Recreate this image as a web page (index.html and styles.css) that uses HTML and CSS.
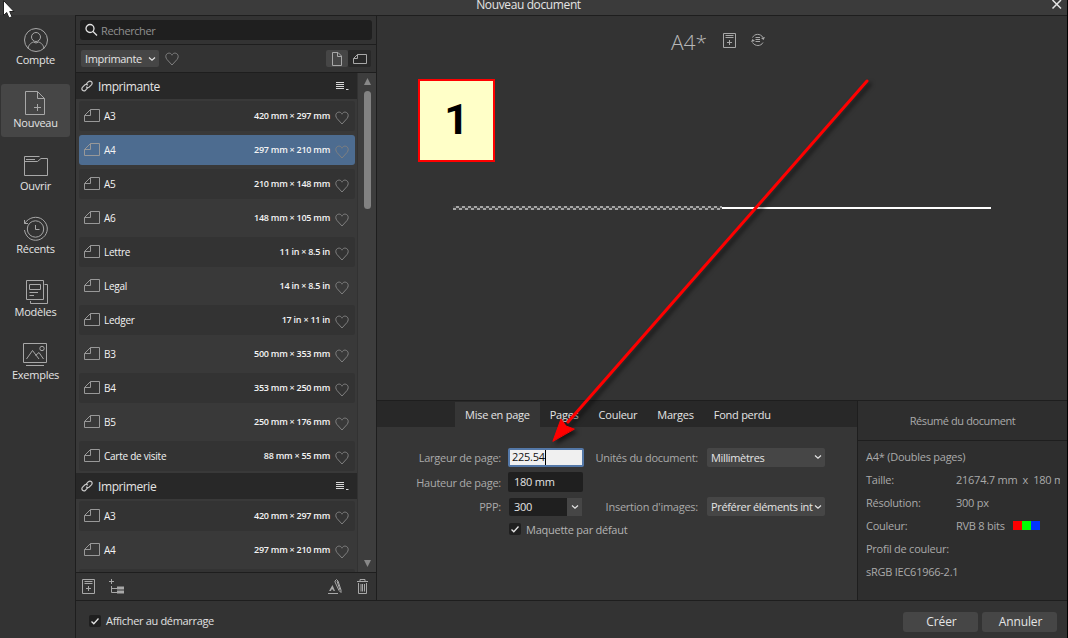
FILE: index.html
```html
<!DOCTYPE html>
<html lang="fr">
  <head>
    <meta charset="UTF-8" />
    <meta name="viewport" content="width=device-width, initial-scale=1.0" />
    <title>Nouveau document</title>
    <link rel="stylesheet" href="styles.css">
  </head>
  <body>
    <!-- shared icons -->
    <svg class="defs" width="0" height="0">
      <symbol id="landscape" viewBox="0 0 18 15">
        <path d="M6.500 1.500H15.500V13.500H.5V7.500L6.500 1.500V7.500H.5" />
      </symbol>
      <symbol id="heart" viewBox="0 0 14 14">
        <path d="M7 13L2 7.500C.6 5.800.4 3.600 1.600 2.200C3.400.4 6.200.9 7 3.200C7.800.9 10.600.4 12.400 2.200C13.600 3.600 13.400 5.800 12 7.500Z" />
      </symbol>
      <symbol id="link" viewBox="0 0 12 12">
        <path d="M5.200 4.200L7.400 1.700Q9 .4 10.500 1.700Q11.800 3.300 10.400 4.800L8 7.200Q6.500 8 5.200 6.800" />
        <path d="M6.800 7.600L4.600 10.200Q3 11.600 1.500 10.300Q.2 8.700 1.600 7.200L4 4.800Q5.500 4 6.800 5.200" />
      </symbol>
      <symbol id="menu" viewBox="0 0 14 10">
        <path d="M0 1.500H8M0 3.500H8M0 5.500H8M0 7.500H8" /><path d="M10 8.500H12.500" />
      </symbol>
      <symbol id="chevron" viewBox="0 0 8 6">
        <path d="M1 1.500L4 4.200L7 1.500" />
      </symbol>
      <symbol id="check" viewBox="0 0 12 12">
        <path d="M2.500 6.500L4.800 8.700L9.500 3.500" />
      </symbol>
      <symbol id="addpage" viewBox="0 0 14 17">
        <path d="M.5 1.500H12.500V15.500H.5Z M2.500 3.500H10.500 M2.500 5.500H10.500 M4 10.500H9 M6.500 8V13" />
      </symbol>
    </svg>

    <header class="titlebar">
      <h1>Nouveau document</h1>
      <svg class="close" width="12" height="12" viewBox="0 0 12 12"><path d="M1.500 0L10 8.500M10 0L1.500 8.500" /></svg>
    </header>

    <div class="window">
      <nav class="sidebar">
        <a class="side_item">
          <svg width="26" height="26" viewBox="0 0 26 26"><circle cx="13" cy="13" r="11.500" /><circle cx="13" cy="10" r="4.500" /><path d="M5 21.500C6 16.500 9 15.500 10.500 15Q13 17 15.500 15C17 15.500 20 16.500 21 21.500" /></svg>
          Compte
        </a>
        <a class="side_item valgt">
          <svg width="26" height="26" viewBox="0 0 26 26"><path d="M2.500 1.500H14.500L21.500 8.500V24.500H2.500ZM14.500 1.500V8.500H21.500M11 17.500H18M14.500 14V21" /></svg>
          Nouveau
        </a>
        <a class="side_item">
          <svg width="26" height="26" viewBox="0 0 26 26"><path d="M1.500 9V3.500H16.500M3 6.500H12M1.500 8.500H14.500L18 5.500H24.500V22.500H1.500Z" /></svg>
          Ouvrir
        </a>
        <a class="side_item">
          <svg width="26" height="26" viewBox="0 0 26 26"><circle cx="12.500" cy="13" r="8.200" /><path d="M12.500 9V13.500H16.500M1.500 4V7.500H5M1.500 7.500C6 1 14 -.5 19.500 3.500C24.500 7.500 26 14 22 19.500C17 26 8 25.500 4 20Q1.800 17 1.500 14" /></svg>
          Récents
        </a>
        <a class="side_item">
          <svg width="26" height="26" viewBox="0 0 26 26"><path d="M3.500 1.500H20.500V20.500H3.500ZM6.500 5.500H17.500V10.500H6.500ZM6.500 13.500H15M6.500 16.500H11M21.500 5.500H24.500V24.500H7.500V22" /></svg>
          Modèles
        </a>
        <a class="side_item">
          <svg width="26" height="26" viewBox="0 0 26 26"><path d="M.5 1.500H23.500V20.500H.5ZM3 23.500H21M3.500 17L9.500 8.500L16 17M12.500 13.500L16 10.500L20.500 17" /><circle cx="19" cy="6.500" r="2.200" /></svg>
          Exemples
        </a>
      </nav>

      <div class="content">
        <section class="presets">
          <div class="search_row">
            <div class="search">
              <svg width="14" height="14" viewBox="0 0 14 14"><circle cx="5" cy="5.500" r="4" /><path d="M8 8.500L12 12.500" /></svg>
              <span>Rechercher</span>
            </div>
          </div>
          <div class="filter_row">
            <div class="select small">Imprimante <svg width="8" height="6"><use href="#chevron" /></svg></div>
            <svg class="heart" width="14" height="14"><use href="#heart" /></svg>
            <div class="orientation">
              <span class="active"><svg width="12" height="16" viewBox="0 0 12 16"><path d="M1.500 1.500H7L10.500 5V14.500H1.500ZM6.500 1.500V5.500H10.500" /></svg></span>
              <span><svg width="17" height="14" viewBox="0 0 17 14"><path d="M6.500 2.500H15.500V11.500H2.500V6.500L6.500 2.500V6.500H2.500" /></svg></span>
            </div>
          </div>

          <div class="list_area">
            <div class="list">
              <h2><svg width="12" height="12"><use href="#link" /></svg>Imprimante<svg class="menu" width="14" height="10"><use href="#menu" /></svg></h2>
              <ul>
                <li><svg class="page" width="18" height="15"><use href="#landscape" /></svg><b>A3</b><i>420 mm × 297 mm</i><svg class="heart" width="14" height="14"><use href="#heart" /></svg></li>
                <li class="selected"><svg class="page" width="18" height="15"><use href="#landscape" /></svg><b>A4</b><i>297 mm × 210 mm</i><svg class="heart" width="14" height="14"><use href="#heart" /></svg></li>
                <li><svg class="page" width="18" height="15"><use href="#landscape" /></svg><b>A5</b><i>210 mm × 148 mm</i><svg class="heart" width="14" height="14"><use href="#heart" /></svg></li>
                <li><svg class="page" width="18" height="15"><use href="#landscape" /></svg><b>A6</b><i>148 mm × 105 mm</i><svg class="heart" width="14" height="14"><use href="#heart" /></svg></li>
                <li><svg class="page" width="18" height="15"><use href="#landscape" /></svg><b>Lettre</b><i>11 in × 8.5 in</i><svg class="heart" width="14" height="14"><use href="#heart" /></svg></li>
                <li><svg class="page" width="18" height="15"><use href="#landscape" /></svg><b>Legal</b><i>14 in × 8.5 in</i><svg class="heart" width="14" height="14"><use href="#heart" /></svg></li>
                <li><svg class="page" width="18" height="15"><use href="#landscape" /></svg><b>Ledger</b><i>17 in × 11 in</i><svg class="heart" width="14" height="14"><use href="#heart" /></svg></li>
                <li><svg class="page" width="18" height="15"><use href="#landscape" /></svg><b>B3</b><i>500 mm × 353 mm</i><svg class="heart" width="14" height="14"><use href="#heart" /></svg></li>
                <li><svg class="page" width="18" height="15"><use href="#landscape" /></svg><b>B4</b><i>353 mm × 250 mm</i><svg class="heart" width="14" height="14"><use href="#heart" /></svg></li>
                <li><svg class="page" width="18" height="15"><use href="#landscape" /></svg><b>B5</b><i>250 mm × 176 mm</i><svg class="heart" width="14" height="14"><use href="#heart" /></svg></li>
                <li><svg class="page" width="18" height="15"><use href="#landscape" /></svg><b>Carte de visite</b><i>88 mm × 55 mm</i><svg class="heart" width="14" height="14"><use href="#heart" /></svg></li>
              </ul>
              <h2><svg width="12" height="12"><use href="#link" /></svg>Imprimerie<svg class="menu" width="14" height="10"><use href="#menu" /></svg></h2>
              <ul>
                <li><svg class="page" width="18" height="15"><use href="#landscape" /></svg><b>A3</b><i>420 mm × 297 mm</i><svg class="heart" width="14" height="14"><use href="#heart" /></svg></li>
                <li><svg class="page" width="18" height="15"><use href="#landscape" /></svg><b>A4</b><i>297 mm × 210 mm</i><svg class="heart" width="14" height="14"><use href="#heart" /></svg></li>
                <li></li>
              </ul>
            </div>
            <div class="scrollbar">
              <svg width="7" height="7" viewBox="0 0 7 7"><path d="M3.500 0L7 7H0Z" /></svg>
              <div class="thumb"></div>
              <svg class="down" width="7" height="7" viewBox="0 0 7 7"><path d="M3.500 7L7 0H0Z" /></svg>
            </div>
          </div>

          <div class="tools">
            <svg width="14" height="17"><use href="#addpage" /></svg>
            <svg width="18" height="17" viewBox="0 0 18 17"><path d="M0 3.500H5M2.500 1V6M2.500 8V14.500H8M2.500 10.500H8" /><path class="fill" d="M8 8.500H15V11.500H8ZM8 12.500H15V15.500H8Z" /></svg>
            <svg class="rename" width="16" height="17" viewBox="0 0 16 17"><path d="M1 15.500H11M8 3L9.500 1.500L11 3L14 12V14.500L12 12.500L8 4ZM10 3L13 12" /><path class="fill" d="M2 13L5.500 7L8 13H6.500L6 11.500H4.500L4 13Z" /></svg>
            <svg width="13" height="17" viewBox="0 0 13 17"><path d="M1 3.500H12M4 3V1.500H9V3M2.500 5V15.500H10.500V5M5 6V13.500M6.500 6V13.500M8.500 6V13.500" /></svg>
          </div>
        </section>

        <main>
          <section class="preview">
            <div class="preview_head">
              <span>A4*</span>
              <svg class="add" width="14" height="17"><use href="#addpage" /></svg>
              <svg class="sync" width="16" height="14" viewBox="0 0 16 14"><path d="M5.500 4.500H10M5.500 6.500H10M5.500 8.500H10M2.500 4.500C4.500 .5 10.500 .2 13 4.500M13 9.500C11 13.500 5 13.500 2.500 9.500" /><path class="fill" d="M11 5L13.500 7L15 4ZM1 9L2.500 6L5 8Z" /></svg>
            </div>
            <div class="spread">
              <div class="checker"></div>
              <div class="sheet"></div>
            </div>
          </section>

          <div class="details">
            <section class="settings">
              <nav class="tabs">
                <span class="active">Mise en page</span>
                <span>Pages</span>
                <span>Couleur</span>
                <span>Marges</span>
                <span>Fond perdu</span>
              </nav>
              <form class="fields">
                <label>Largeur de page:</label>
                <div class="input focus">225.54<span class="caret"></span></div>
                <label>Unités du document:</label>
                <div class="select"><span>Millimètres</span><svg width="8" height="6"><use href="#chevron" /></svg></div>

                <label>Hauteur de page:</label>
                <div class="input">180 mm</div>
                <span></span>
                <span></span>

                <label>PPP:</label>
                <div class="combo"><span>300</span><em><svg width="8" height="6"><use href="#chevron" /></svg></em></div>
                <label>Insertion d'images:</label>
                <div class="select"><span>Préférer éléments int</span><svg width="8" height="6"><use href="#chevron" /></svg></div>

                <div class="check"><svg width="12" height="12"><use href="#check" /></svg><span>Maquette par défaut</span></div>
              </form>
            </section>

            <aside class="summary">
              <h3>Résumé du document</h3>
              <dl>
                <dt class="wide">A4* (Doubles pages)</dt>
                <dt>Taille:</dt><dd>21674.7 mm&nbsp; x&nbsp; 180 mm</dd>
                <dt>Résolution:</dt><dd>300 px</dd>
                <dt>Couleur:</dt><dd>RVB 8 bits <span class="rgb"></span></dd>
                <dt class="wide">Profil de couleur:</dt>
                <dt class="wide">sRGB IEC61966-2.1</dt>
              </dl>
            </aside>
          </div>
        </main>

        <footer>
          <div class="check light"><svg width="12" height="12"><use href="#check" /></svg><span>Afficher au démarrage</span></div>
          <button>Créer</button>
          <button>Annuler</button>
        </footer>
      </div>
    </div>

    <!-- notes drawn over the dialog -->
    <div class="note">1</div>
    <svg class="arrow" width="340" height="380" viewBox="0 0 340 380">
      <path d="M327 11L28 352" />
      <path class="head" d="M13 371L21 349L26 356L34 359Z" />
    </svg>
    <svg class="cursor" width="16" height="20" viewBox="0 0 16 20"><path d="M3.500 .5V15.500L6.700 12.500L9 18L12 16.700L9.700 11.500H14Z" /></svg>
  </body>
</html>
```

FILE: styles.css
```css
* {
  box-sizing: border-box;
}

body {
  margin: 0;
  width: 1068px;
  height: 638px;
  overflow: hidden;
  display: flex;
  flex-direction: column;
  position: relative;
  background-color: #333;
  border-right: 1px solid #000;
  color: #e4e4e4;
  font-family: "Open Sans", "Noto Sans", sans-serif;
  font-size: 11px;
  letter-spacing: -0.25px;
}

h1,
h2,
h3,
ul,
dl,
dd {
  margin: 0;
  padding: 0;
  font-weight: normal;
}

svg {
  display: block;
  flex: none;
  fill: none;
  stroke: #a8a8a8;
  stroke-width: 1;
}

.fill {
  fill: #a8a8a8;
  stroke: none;
}

.defs {
  position: absolute;
}

.titlebar {
  height: 15px;
  flex: none;
  display: flex;
  justify-content: flex-end;
  background-color: #3b3b3b;
}

h1 {
  flex: 1;
  padding-right: 10px;
  font-size: 12px;
  line-height: 10px;
  letter-spacing: -0.38px;
  text-align: center;
}

.close {
  margin-left: -16px;
  margin-right: 4px;
  stroke: #e4e4e4;
  stroke-width: 1.5;
}

.window {
  flex: 1;
  display: flex;
  min-height: 0;
}

/* left navigation */
.sidebar {
  width: 75px;
  padding: 6px 0 0 1px;
  display: flex;
  flex-direction: column;
  gap: 10px;
}

.side_item {
  width: 69px;
  height: 53px;
  padding-top: 6px;
  display: flex;
  flex-direction: column;
  align-items: center;
  border-radius: 3px;
  line-height: 14px;
}

.side_item.valgt {
  background-color: #464646;
}

.content {
  flex: 1;
  min-width: 0;
  display: grid;
  grid-template-columns: 300px 1fr;
  grid-template-rows: 585px 1fr;
  border-left: 1px solid #1e1e1e;
  border-top: 1px solid #1e1e1e;
}

/* preset list */
.presets {
  display: flex;
  flex-direction: column;
  min-height: 0;
  border-bottom: 1px solid #1e1e1e;
}

.search_row {
  height: 29px;
  padding: 4px;
  border-bottom: 1px solid #1e1e1e;
}

.search {
  height: 20px;
  padding-left: 5px;
  display: flex;
  align-items: center;
  gap: 2px;
  background-color: #1f1f1f;
  border-radius: 3px;
  color: #909090;
  letter-spacing: -0.4px;
}

.search svg {
  stroke: #e4e4e4;
  stroke-width: 1.3;
}

.filter_row {
  height: 28px;
  padding: 0 5px;
  display: flex;
  align-items: center;
  gap: 6px;
  border-bottom: 1px solid #1e1e1e;
}

.heart {
  stroke: #808080;
}

.orientation {
  display: flex;
  margin-left: auto;
}

.orientation span {
  width: 23px;
  height: 17px;
  display: flex;
  align-items: center;
  justify-content: center;
  background-color: #282828;
  border-radius: 2px;
}

.orientation span.active {
  width: 22px;
  background-color: #464646;
}

.list_area {
  flex: 1;
  min-height: 0;
  display: flex;
  background-color: #393939;
}

.list {
  flex: 1;
  overflow: hidden;
  border-right: 1px solid #323232;
}

h2 {
  height: 26px;
  padding: 0 7px 0 5px;
  display: flex;
  align-items: center;
  gap: 5px;
  background-color: #282828;
  font-size: 12px;
  letter-spacing: -0.4px;
}

h2 svg {
  stroke: #c8c8c8;
  stroke-width: 1.2;
}

h2 .menu {
  margin-left: auto;
  stroke: #d8d8d8;
  stroke-width: 1;
}

ul {
  padding: 2px 2px 2px 3px;
  display: flex;
  flex-direction: column;
  gap: 4px;
}

li {
  height: 30px;
  flex: none;
  padding: 0 6px 1px 5px;
  display: flex;
  align-items: center;
  border-radius: 3px;
  font-size: 10px;
  color: #f4f4f4;
}

li:nth-child(odd) {
  background-color: #333;
}

li.selected {
  background-color: #4d6c90;
}

li b,
li i {
  font-weight: 500;
  font-style: normal;
}

li .page {
  margin-right: 2px;
  stroke: #989898;
}

li i {
  margin: 0 5px 1px auto;
  font-size: 9px;
  font-weight: 600;
}

li .heart {
  margin-top: 5px;
}

.scrollbar {
  width: 18px;
  padding: 5px 0;
  display: flex;
  flex-direction: column;
  align-items: center;
  gap: 6px;
  background-color: #3d3d3d;
}

.scrollbar svg {
  fill: #888;
  stroke: none;
}

.scrollbar .down {
  margin-top: auto;
}

.thumb {
  width: 7px;
  height: 118px;
  background-color: #828282;
  border-radius: 4px;
}

.tools {
  height: 28px;
  padding: 0 7px 0 6px;
  display: flex;
  align-items: center;
  gap: 13px;
  border-top: 1px solid #1e1e1e;
}

.rename {
  margin-left: auto;
}

/* right part */
main {
  min-width: 0;
  display: flex;
  flex-direction: column;
  border-left: 1px solid #1e1e1e;
  border-bottom: 1px solid #1e1e1e;
}

.preview {
  height: 384px;
  flex: none;
}

.preview_head {
  height: 52px;
  padding-left: 294px;
  display: flex;
  align-items: center;
  color: #b8b8b8;
  font-size: 21px;
  font-weight: 300;
  letter-spacing: 0;
}

.preview_head .add {
  margin: -4px 0 0 16px;
}

.preview_head .sync {
  margin: -4px 0 0 13px;
}

.spread {
  width: 538px;
  margin: 138px 0 0 76px;
  display: flex;
  align-items: center;
}

.checker {
  width: 269px;
  height: 4px;
  background: repeating-conic-gradient(#a5a5a5 0 25%, #444 0 50%) 0 0 / 6px 4px;
}

.sheet {
  flex: 1;
  height: 2px;
  background-color: #fff;
}

.details {
  flex: 1;
  min-height: 0;
  display: flex;
  border-top: 1px solid #1e1e1e;
}

.settings {
  width: 480px;
  background-color: #363636;
}

.tabs {
  height: 26px;
  padding: 1px 0 0 78px;
  display: flex;
  background-color: #282828;
}

.tabs span {
  padding: 0 10px;
  line-height: 26px;
}

.tabs .active {
  background-color: #363636;
}

.fields {
  padding-top: 20px;
  display: grid;
  grid-template-columns: 124px 76px 109px 118px;
  grid-template-rows: 20px 20px 19px 16px;
  column-gap: 7px;
  row-gap: 5px;
  align-items: center;
}

label {
  color: #aaa;
  text-align: right;
  white-space: nowrap;
}

.focus + label,
.combo + label {
  padding-right: 2px;
}

.input,
.combo {
  height: 20px;
  padding-left: 6px;
  line-height: 20px;
  background-color: #1f1f1f;
  border-radius: 2px;
}

.input {
  width: 75px;
}

.input.focus {
  width: 76px;
  height: 19px;
  padding-left: 2px;
  display: flex;
  align-items: center;
  background-color: #f0f0f0;
  border: 2px solid #5478a8;
  color: #111;
}

.caret {
  width: 1px;
  height: 15px;
  background-color: #000;
}

.combo {
  width: 73px;
  height: 18px;
  margin-left: 1px;
  padding-left: 5px;
  display: flex;
  align-items: center;
  justify-content: space-between;
}

.combo em {
  width: 15px;
  height: 18px;
  padding: 6px 4px;
  background-color: #464646;
}

.select {
  height: 19px;
  padding: 0 3px 0 4px;
  display: flex;
  align-items: center;
  justify-content: space-between;
  background-color: #464646;
  border-radius: 2px;
  letter-spacing: -0.35px;
  white-space: nowrap;
}

.select.small {
  width: 78px;
  height: 17px;
}

.select svg,
.combo svg {
  stroke: #e4e4e4;
  stroke-width: 1.2;
}

.check {
  display: flex;
  align-items: center;
  gap: 5px;
  color: #b4b4b4;
}

.check svg {
  background-color: #1f1f1f;
  stroke: #e4e4e4;
  stroke-width: 1.3;
  border-radius: 2px;
}

.fields .check {
  grid-column: 2 / 5;
  margin-left: 1px;
}

.summary {
  flex: 1;
  min-width: 0;
  background-color: #2e2e2e;
  border-left: 1px solid #1e1e1e;
  color: #aaa;
}

h3 {
  height: 40px;
  line-height: 40px;
  border-bottom: 1px solid #1e1e1e;
  font-size: 11px;
  letter-spacing: -0.4px;
  text-align: center;
}

dl {
  padding: 4px 7px 0 8px;
  display: grid;
  grid-template-columns: 90px 1fr;
  line-height: 23px;
}

dt.wide {
  grid-column: 1 / 3;
}

dd {
  overflow: hidden;
  white-space: nowrap;
  display: flex;
  align-items: center;
  gap: 8px;
}

.rgb {
  width: 27px;
  height: 9px;
  background: linear-gradient(90deg, #f00 33.3%, #0f0 33.3% 66.6%, #03f 66.6%);
}

footer {
  grid-column: 1 / 3;
  padding: 0 10px 0 13px;
  display: flex;
  align-items: center;
  gap: 4px;
}

.check.light {
  margin: 2px auto 0 0;
  color: #e0e0e0;
  letter-spacing: -0.33px;
}

button {
  width: 75px;
  height: 20px;
  margin-top: 4px;
  padding: 0 0 0 2px;
  background-color: #464646;
  border: none;
  border-radius: 3px;
  color: #e4e4e4;
  font-family: "Open Sans", "Noto Sans", sans-serif;
  font-size: 12px;
  letter-spacing: -0.1px;
}

/* annotations */
.note {
  position: absolute;
  left: 418px;
  top: 79px;
  width: 77px;
  height: 83px;
  background-color: #ffffc8;
  border: 2px solid #f00;
  color: #000;
  font: bold 43px/77px Roboto, Arial, sans-serif;
  text-align: center;
}

.arrow {
  position: absolute;
  left: 540px;
  top: 70px;
  stroke: #f00;
  stroke-width: 3;
  stroke-linecap: round;
  filter: drop-shadow(3px 3px 2px rgba(0, 0, 0, 0.6));
}

.arrow .head {
  fill: #f00;
  stroke: #f00;
  stroke-width: 1;
}

.cursor {
  position: absolute;
  left: 0;
  top: 0;
  fill: #fff;
  stroke: #222;
}
```
